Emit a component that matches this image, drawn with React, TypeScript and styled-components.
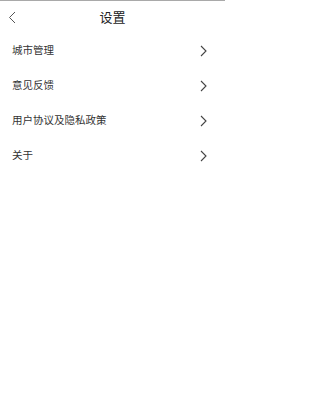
import React from "react";
import styled, { createGlobalStyle } from "styled-components";

const Global = createGlobalStyle`
  html, body { margin: 0; padding: 0; background: #fff; }
  body { font-family: "Noto Sans CJK SC", "Noto Sans", sans-serif; }
`;

const Page = styled.div`
  width: 225px;
  min-height: 400px;
  background: #fff;
  border-top: 1px solid #a9a9a9;
  box-sizing: border-box;
`;

const Header = styled.div`
  height: 32px;
  display: grid;
  grid-template-columns: 40px 1fr 40px;
  align-items: center;
`;

const BackButton = styled.div`
  display: flex;
  align-items: center;
  padding-left: 8px;
  height: 100%;
`;

const Title = styled.div`
  text-align: center;
  font-size: 13px;
  color: #222;
  line-height: 1;
  margin-top: -2px;
`;

const List = styled.div`
  display: flex;
  flex-direction: column;
`;

const Row = styled.div`
  height: 35px;
  display: flex;
  align-items: center;
  justify-content: space-between;
  padding: 0 18px 0 12px;
`;

const Label = styled.span`
  font-size: 10.5px;
  color: #333;
  line-height: 1;
`;

const Chevron = () => (
  <svg width="7" height="12" viewBox="0 0 7 12">
    <path d="M1 1 L6 6 L1 11" fill="none" stroke="#444" strokeWidth="1.1" />
  </svg>
);

const Back = () => (
  <svg width="8" height="13" viewBox="0 0 8 13">
    <path d="M7 1 L1.5 6.5 L7 12" fill="none" stroke="#555" strokeWidth="1" />
  </svg>
);

const items = ["城市管理", "意见反馈", "用户协议及隐私政策", "关于"];

export default function App() {
  return (
    <>
      <Global />
      <Page>
        <Header>
          <BackButton>
            <Back />
          </BackButton>
          <Title>设置</Title>
          <div />
        </Header>
        <List>
          {items.map((t) => (
            <Row key={t}>
              <Label>{t}</Label>
              <Chevron />
            </Row>
          ))}
        </List>
      </Page>
    </>
  );
}
